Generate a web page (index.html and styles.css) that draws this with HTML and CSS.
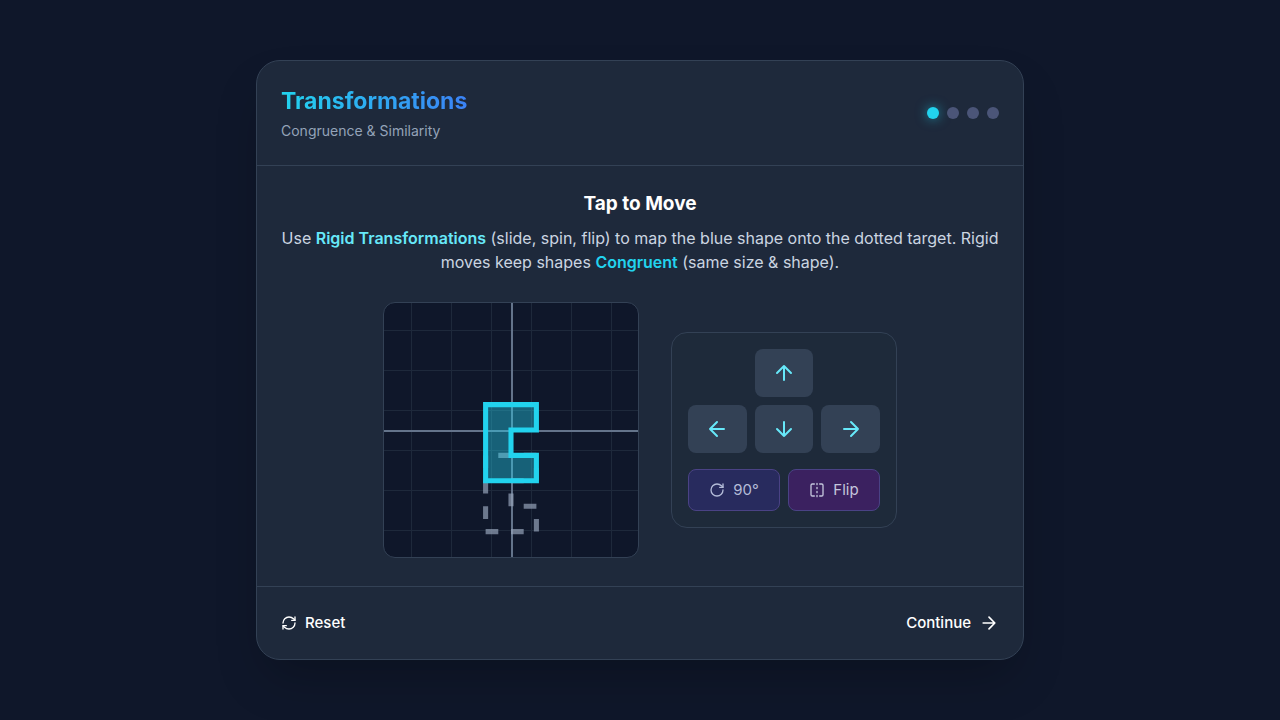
FILE: index.html
```html
<!DOCTYPE html>
<html lang="en">
<head>
    <meta charset="UTF-8">
    <meta name="viewport" content="width=device-width, initial-scale=1.0">
    <title>Transformations</title>
    <link rel="stylesheet" href="styles.css">
</head>
<body>
    <div class="card">
        <header class="card-header">
            <div>
                <h1>Transformations</h1>
                <p class="subtitle">Congruence &amp; Similarity</p>
            </div>
            <div class="steps">
                <span class="dot active"></span>
                <span class="dot"></span>
                <span class="dot"></span>
                <span class="dot"></span>
            </div>
        </header>

        <main>
            <h2>Tap to Move</h2>
            <p class="intro">Use <strong class="rigid">Rigid Transformations</strong> (slide, spin, flip) to map the blue shape onto the dotted target. Rigid moves keep shapes <strong class="congruent">Congruent</strong> (same size &amp; shape).</p>

            <div class="stage">
                <div class="board">
                    <!-- one unit is a tenth of the board -->
                    <svg viewBox="-5 -5 10 10">
                        <path id="target" class="target" d="M-1 1 V4 H1 V3 H0 V2 H1 V1 Z"/>
                        <path id="shape" class="shape" d="M-1 -1 V2 H1 V1 H0 V0 H1 V-1 Z"/>
                    </svg>
                </div>

                <div class="controls">
                    <div class="arrows">
                        <button type="button" class="move up" aria-label="Up">
                            <svg class="icon icon-xl" viewBox="0 0 24 24"><path d="M12 19V5M5 12l7-7 7 7"/></svg>
                        </button>
                        <button type="button" class="move left" aria-label="Left">
                            <svg class="icon icon-xl" viewBox="0 0 24 24"><path d="M19 12H5M12 19l-7-7 7-7"/></svg>
                        </button>
                        <button type="button" class="move" aria-label="Down">
                            <svg class="icon icon-xl" viewBox="0 0 24 24"><path d="M12 5v14M19 12l-7 7-7-7"/></svg>
                        </button>
                        <button type="button" class="move" aria-label="Right">
                            <svg class="icon icon-xl" viewBox="0 0 24 24"><path d="M5 12h14M12 5l7 7-7 7"/></svg>
                        </button>
                    </div>
                    <div class="actions">
                        <button type="button" class="action rotate">
                            <svg class="icon" viewBox="0 0 24 24"><path d="M21 12a9 9 0 1 1-9-9c2.52 0 4.93 1 6.74 2.74L21 8"/><path d="M21 3v5h-5"/></svg>
                            90°
                        </button>
                        <button type="button" class="action flip">
                            <svg class="icon" viewBox="0 0 24 24"><path d="M8 3H5a2 2 0 0 0-2 2v14a2 2 0 0 0 2 2h3M16 3h3a2 2 0 0 1 2 2v14a2 2 0 0 1-2 2h-3M12 20v2M12 14v2M12 8v2M12 2v2"/></svg>
                            Flip
                        </button>
                    </div>
                </div>
            </div>
        </main>

        <footer>
            <button type="button" class="link-btn">
                <svg class="icon" viewBox="0 0 24 24"><path d="M3 12a9 9 0 0 1 9-9 9.75 9.75 0 0 1 6.74 2.74L21 8"/><path d="M21 3v5h-5"/><path d="M21 12a9 9 0 0 1-9 9 9.75 9.75 0 0 1-6.74-2.74L3 16"/><path d="M8 16H3v5"/></svg>
                Reset
            </button>
            <button type="button" class="link-btn">
                Continue
                <svg class="icon icon-lg" viewBox="0 0 24 24"><path d="M5 12h14M12 5l7 7-7 7"/></svg>
            </button>
        </footer>
    </div>
</body>
</html>
```
FILE: styles.css
```css
* {
    box-sizing: border-box;
}

body {
    margin: 0;
    min-height: 100vh;
    display: flex;
    align-items: center;
    justify-content: center;
    padding: 16px;
    background-color: #0f172a;
    color: #ffffff;
    font-family: Inter, "Liberation Sans", sans-serif;
    font-size: 16px;
    line-height: 24px;
}

h1, h2, p {
    margin: 0;
}

button {
    font: inherit;
    font-size: 15px;
    color: inherit;
    border: none;
    background: none;
    padding: 0;
    cursor: pointer;
}

svg {
    display: block;
}

.card {
    display: flex;
    flex-direction: column;
    width: 100%;
    max-width: 768px;
    min-height: 600px;
    background-color: #1e293b;
    border: 1px solid #334155;
    border-radius: 24px;
    box-shadow: 0 25px 50px -12px rgba(0, 0, 0, 0.25);
}

.card-header {
    display: flex;
    align-items: center;
    justify-content: space-between;
    padding: 24px;
    border-bottom: 1px solid #334155;
}

h1 {
    font-size: 23px;
    line-height: 32px;
    font-weight: 700;
    background: linear-gradient(to right, #22d3ee, #3b82f6);
    -webkit-background-clip: text;
    background-clip: text;
    color: transparent;
}

.subtitle {
    margin-top: 4px;
    font-size: 14px;
    line-height: 20px;
    color: #94a3b8;
}

.steps {
    display: flex;
    gap: 8px;
}

.dot {
    width: 12px;
    height: 12px;
    border-radius: 50%;
    background-color: #4b5578;
}

.dot.active {
    background-color: #22d3ee;
    box-shadow: 0 0 12px rgba(34, 211, 238, 0.6);
}

main {
    flex: 1;
    display: flex;
    flex-direction: column;
    padding: 24px;
}

h2 {
    font-size: 19px;
    line-height: 28px;
    font-weight: 700;
    text-align: center;
}

.intro {
    margin: 8px 0 24px;
    text-align: center;
    color: #cbd5e1;
}

.rigid {
    color: #67e8f9;
    font-weight: 600;
}

.congruent {
    color: #22d3ee;
    font-weight: 600;
}

.stage {
    flex: 1;
    display: flex;
    flex-wrap: wrap;
    align-items: center;
    justify-content: center;
    gap: 32px;
}

.board {
    width: 256px;
    height: 256px;
    border: 1px solid #334155;
    border-radius: 12px;
    overflow: hidden;
    background-color: #0f172a;
    /* axes first, then the 40px grid */
    background-image:
        linear-gradient(#64748b, #64748b),
        linear-gradient(#64748b, #64748b),
        linear-gradient(to right, #1e293b 1px, transparent 1px),
        linear-gradient(to bottom, #1e293b 1px, transparent 1px);
    background-size: 2px 100%, 100% 2px, 40px 40px, 40px 40px;
    background-position: 127px 0, 0 127px, 27px 27px, 27px 27px;
    background-repeat: no-repeat, no-repeat, repeat, repeat;
}

.target {
    fill: none;
    stroke: #94a3b8;
    stroke-opacity: 0.7;
    stroke-width: 0.2;
    stroke-dasharray: 0.5 0.5;
}

.shape {
    fill: #22d3ee;
    fill-opacity: 0.4;
    stroke: #22d3ee;
    stroke-width: 0.2;
}

.controls {
    width: 226px;
    padding: 16px;
    border: 1px solid #334155;
    border-radius: 16px;
    background-color: #1e2a3a;
}

.arrows {
    display: grid;
    grid-template-columns: repeat(3, 1fr);
    gap: 8px;
}

.move {
    display: flex;
    align-items: center;
    justify-content: center;
    height: 48px;
    border-radius: 8px;
    background-color: #334155;
    color: #67e8f9;
}

.move.up {
    grid-column: 2;
}

.move.left {
    grid-column: 1;
}

.actions {
    display: grid;
    grid-template-columns: 1fr 1fr;
    gap: 8px;
    margin-top: 16px;
}

.action {
    display: flex;
    align-items: center;
    justify-content: center;
    gap: 8px;
    padding: 8px;
    border: 1px solid #4a4285;
    border-radius: 8px;
}

.rotate {
    background-color: #282b5e;
    color: #b4bcd8;
}

.flip {
    background-color: #3b2160;
    color: #c4c6dc;
}

footer {
    display: flex;
    align-items: center;
    justify-content: space-between;
    padding: 24px;
    border-top: 1px solid #334155;
}

.link-btn {
    display: flex;
    align-items: center;
    gap: 8px;
    font-weight: 500;
}

.icon {
    width: 16px;
    height: 16px;
    fill: none;
    stroke: currentColor;
    stroke-width: 2;
    stroke-linecap: round;
    stroke-linejoin: round;
}

.icon-lg {
    width: 20px;
    height: 20px;
}

.icon-xl {
    width: 24px;
    height: 24px;
}
```
